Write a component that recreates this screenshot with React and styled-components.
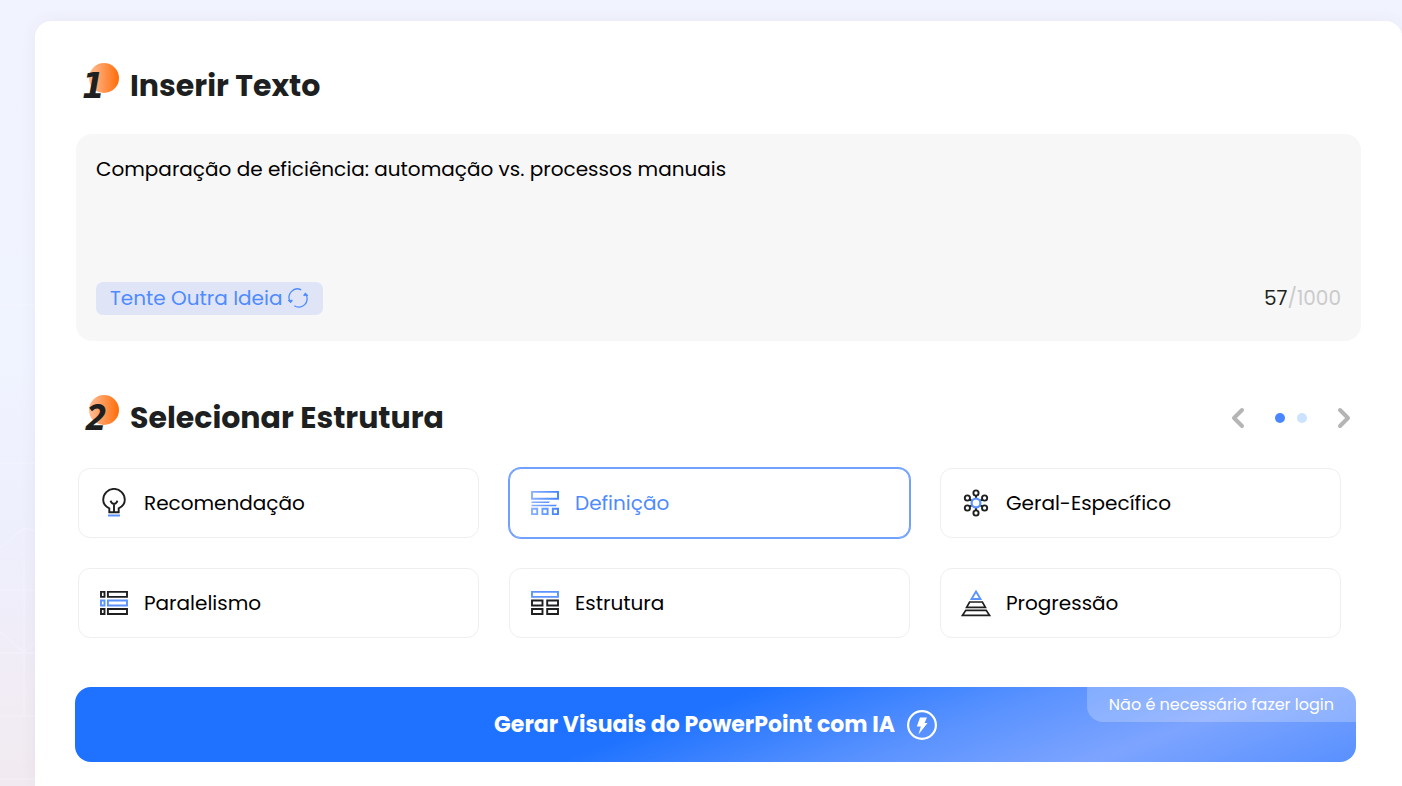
import React, { useState } from "react";
import styled, { createGlobalStyle } from "styled-components";

const GlobalStyle = createGlobalStyle`
  * {
    box-sizing: border-box;
  }
  body {
    margin: 0;
    color: #1d1f21;
    font-family: Poppins, Inter, "Liberation Sans", sans-serif;
  }
  button,
  textarea {
    font-family: inherit;
  }
`;

const Page = styled.div`
  position: relative;
  min-height: 100vh;
  display: flex;
  padding: 21px 0 0 35px;
  background: linear-gradient(180deg, #f1f3fe 0%, #f0f4ff 45%, #eeeffd 68%, #f1ecf5 88%, #f1eaf0 100%);
`;

const Backdrop = styled.svg`
  position: absolute;
  left: 0;
  top: 0;
  width: 35px;
  height: 100%;
  opacity: 0.5;
`;

const Card = styled.main`
  position: relative;
  flex: 1;
  padding: 37px 41px 24px 40px;
  border-radius: 16px 16px 0 0;
  background: #fff;
  box-shadow: 0 0 16px rgba(80, 60, 100, 0.06);
`;

const SectionHead = styled.div`
  display: flex;
  align-items: center;
  justify-content: space-between;
  height: 56px;
  padding: 0 5px 0 8px;
`;

const Title = styled.h2`
  display: flex;
  align-items: center;
  gap: 9px;
  margin: 0;
  font-size: 30px;
  line-height: 40px;
  font-weight: 700;
`;

const StepBadge = styled.svg`
  width: 38px;
  height: 44px;
  overflow: visible;
  font-family: ${(props) => props.$face}, sans-serif;
  font-size: 36px;
  font-weight: 700;
  font-style: italic;
`;

const InputPanel = styled.div`
  margin: 20px 0 49px 1px;
  padding: 16px 20px 26px;
  border-radius: 16px;
  background: #f7f7f7;
`;

const TextBox = styled.textarea`
  display: block;
  width: 100%;
  height: 132px;
  padding: 4px 0;
  border: 0;
  outline: 0;
  resize: none;
  background: transparent;
  color: #000;
  font-size: 20px;
  line-height: 30px;
`;

const PanelFoot = styled.div`
  display: flex;
  align-items: center;
  justify-content: space-between;
  height: 33px;
  line-height: 30px;
`;

const IdeaButton = styled.button`
  display: flex;
  align-items: center;
  gap: 6px;
  height: 33px;
  padding: 0 15px 2px 14px;
  border: 0;
  border-radius: 7px;
  background: #dfe5f7;
  color: #4f8bff;
  font-size: 20px;
`;

const Counter = styled.span`
  padding-bottom: 2px;
  color: #cbcbcb;
  font-size: 20px;

  b {
    color: #1d1f21;
    font-weight: 400;
  }
`;

const Pager = styled.div`
  display: flex;
  align-items: center;
  gap: 13px;
`;

const ArrowButton = styled.button`
  display: flex;
  padding: 0;
  border: 0;
  background: none;
  color: #b5b5b5;
`;

const Dot = styled.button`
  width: 10px;
  height: 10px;
  padding: 0;
  border: 0;
  border-radius: 50%;
  background: ${(props) => (props.$active ? "#4a86ff" : "#cce3ff")};
`;

const Dots = styled.div`
  display: flex;
  gap: 12px;
  padding: 0 12px;
`;

const Grid = styled.div`
  display: grid;
  grid-template-columns: repeat(3, 1fr);
  gap: 30px;
  margin: 22px 20px 49px 3px;
`;

const Option = styled.button`
  display: flex;
  align-items: center;
  gap: 15px;
  height: 70px;
  padding: 0 20px;
  border: 1px solid ${(props) => (props.$active ? "#72a1fd" : "#efefef")};
  border-radius: 12px;
  box-shadow: ${(props) => (props.$active ? "0 0 0 1px #72a1fd" : "none")};
  background: #fff;
  color: ${(props) => (props.$active ? "#4f8bff" : "#000")};
  font-size: 20px;
  text-align: left;
`;

const Generate = styled.button`
  position: relative;
  display: flex;
  align-items: center;
  justify-content: center;
  gap: 12px;
  width: calc(100% - 5px);
  height: 75px;
  padding: 0;
  border: 0;
  border-radius: 16px;
  overflow: hidden;
  background: linear-gradient(160deg, #1e72ff 0%, #1e72ff 46%, #5992ff 66%, #7da4ff 82%, #5890ff 100%);
  color: #fff;
  font-size: 22px;
  line-height: 34px;
  font-weight: 700;
`;

const LoginNote = styled.span`
  position: absolute;
  top: 0;
  right: 0;
  padding: 0 22px;
  border-bottom-left-radius: 16px;
  background: rgba(255, 255, 255, 0.23);
  font-size: 16px;
  line-height: 35px;
  font-weight: 400;
`;

const Icon = ({ children }) => (
  <svg width="30" height="30" viewBox="0 0 30 30" fill="none" stroke="#1d1f21" strokeWidth="1.9" aria-hidden="true">
    {children}
  </svg>
);

const BLUE = "#5b94ff";

const BulbIcon = () => (
  <Icon>
    <path d="M10.3 24.2v-3.8C6.8 18.7 4.2 16 4.2 11.700a10.8 10.8 0 0 1 21.6 0c0 4.300-2.6 7-6.100 8.700v3.800z" />
    <path d="M15 24v-8M11.500 12.800l.8 1.500c.6 1.100 1.500 1.500 2.700 1.700 1.200-.2 2.100-.6 2.700-1.700l.8-1.500" />
    <path stroke={BLUE} strokeWidth="2" d="M9 27.500h12" />
  </Icon>
);

const DefinitionIcon = () => (
  <Icon>
    <defs>
      <linearGradient id="defFade" gradientUnits="userSpaceOnUse" x1="1" y1="0" x2="29" y2="0">
        <stop stopColor="#8bb2ff" />
        <stop offset="1" stopColor="#4182ff" />
      </linearGradient>
    </defs>
    <g stroke="url(#defFade)">
      <path d="M2 3.900h26v6.800H2zM2 20.800h5.200v5.300H2zM12.400 20.800h5.200v5.300h-5.200zM22.800 20.800H28v5.300h-5.200z" />
      <path strokeWidth="1.500" d="M1.500 14.200H19v.1M1.500 17.400H26v.1" />
    </g>
  </Icon>
);

const NetworkIcon = () => (
  <Icon>
    <path d="M15 7.500v3M15 19.500v3M9 11.700l2.400 1.300M18.600 17l2.400 1.300M21 11.700L18.600 13M11.400 17L9 18.300" />
    <circle cx="15" cy="5" r="2.600" />
    <circle cx="15" cy="25" r="2.600" />
    <circle cx="6.400" cy="10" r="2.600" />
    <circle cx="23.600" cy="10" r="2.600" />
    <circle cx="6.400" cy="20" r="2.600" />
    <circle cx="23.600" cy="20" r="2.600" />
    <circle cx="15" cy="15" r="4.400" stroke={BLUE} strokeWidth="2.200" />
  </Icon>
);

const ParallelIcon = () => (
  <Icon>
    <path d="M2 3.900h3.500v5H2zM8.900 3.900H28v5H8.900zM2 21h3.500v5H2zM8.900 21H28v5H8.900z" />
    <path stroke={BLUE} d="M2 12.500h3.500v5H2zM8.900 12.500H28v5H8.900z" />
  </Icon>
);

const StructureIcon = () => (
  <Icon>
    <path stroke={BLUE} d="M2 3.900h26v5H2z" />
    <path d="M2 12.500h10.500v5H2zM17.200 12.500H28v5H17.200zM2 21h10.500v5H2zM17.200 21H28v5H17.200z" />
  </Icon>
);

const PyramidIcon = () => (
  <Icon>
    <path stroke={BLUE} d="M15 3.500l4.500 7.500h-9z" />
    <path strokeWidth="1.700" d="M8.600 14h12.800l3 5.300H5.600zM4.800 22.300h20.400l3.300 5H1.500z" />
  </Icon>
);

const structures = [
  { name: "Recomendação", icon: BulbIcon },
  { name: "Definição", icon: DefinitionIcon },
  { name: "Geral-Específico", icon: NetworkIcon },
  { name: "Paralelismo", icon: ParallelIcon },
  { name: "Estrutura", icon: StructureIcon },
  { name: "Progressão", icon: PyramidIcon },
];

const Step = ({ number, face, x }) => (
  <StepBadge viewBox="0 0 38 44" $face={face}>
    <defs>
      <linearGradient id={`sun${number}`}>
        <stop stopColor="#ffbe96" />
        <stop offset="0.45" stopColor="#ff9a5a" />
        <stop offset="1" stopColor="#ff6c08" />
      </linearGradient>
      <filter id={`soft${number}`}>
        <feGaussianBlur stdDeviation="0.7" />
      </filter>
    </defs>
    <circle cx="21" cy="14" r="15" fill={`url(#sun${number})`} filter={`url(#soft${number})`} />
    <text x={x} y="34" fill="#1d1f21">
      {number}
    </text>
  </StepBadge>
);

const Arrow = ({ d }) => (
  <svg width="24" height="24" viewBox="0 0 24 24" fill="none" stroke="currentColor" strokeWidth="4" strokeLinecap="round" strokeLinejoin="round">
    <path d={d} />
  </svg>
);

const App = () => {
  const [text, setText] = useState("Comparação de eficiência: automação vs. processos manuais");
  const [selected, setSelected] = useState("Definição");
  const [page, setPage] = useState(0);

  return (
    <Page>
      <GlobalStyle />
      <Backdrop fill="none" stroke="#f8f8ff" aria-hidden="true">
        <path d="M0 305h35M0 463h35M0 590h35M0 653h35M0 716h35M0 779h35M24 526v190M0 548l24-20 11 3M0 632l24 20 11-10" />
      </Backdrop>
      <Card>
        <SectionHead>
          <Title>
            <Step number="1" x="-1" face={'"DejaVu Sans Condensed", "DejaVu Sans"'} />
            Inserir Texto
          </Title>
        </SectionHead>
        <InputPanel>
          <TextBox
            aria-label="Inserir Texto"
            maxLength={1000}
            value={text}
            onChange={(e) => setText(e.target.value)}
          />
          <PanelFoot>
            <IdeaButton type="button">
              Tente Outra Ideia
              <svg width="20" height="20" viewBox="0 0 20 20" fill="none" stroke="currentColor" strokeWidth="1.300">
                <path d="M13.200 1.900A8.300 8.300 0 0 0 2.300 13.600M6.300 17.800A8.300 8.300 0 0 0 17.700 6.200" />
                <path fill="currentColor" d="M.8 12.600l1.900 1.700 1.600-2.200-1.700.9zM19.200 7.200l-1.900-1.700-1.600 2.200 1.700-.9z" />
              </svg>
            </IdeaButton>
            <Counter>
              <b>{text.length}</b>/1000
            </Counter>
          </PanelFoot>
        </InputPanel>

        <SectionHead>
          <Title>
            <Step number="2" x="3" face={'"Open Sans", "Noto Sans"'} />
            Selecionar Estrutura
          </Title>
          <Pager>
            <ArrowButton type="button" aria-label="Anterior" onClick={() => setPage(0)}>
              <Arrow d="M16 4l-8 8 8 8" />
            </ArrowButton>
            <Dots>
              <Dot type="button" aria-label="Página 1" $active={page === 0} onClick={() => setPage(0)} />
              <Dot type="button" aria-label="Página 2" $active={page === 1} onClick={() => setPage(1)} />
            </Dots>
            <ArrowButton type="button" aria-label="Próxima" onClick={() => setPage(1)}>
              <Arrow d="M8 4l8 8-8 8" />
            </ArrowButton>
          </Pager>
        </SectionHead>
        <Grid>
          {structures.map(({ name, icon: StructIcon }) => (
            <Option key={name} type="button" $active={name === selected} onClick={() => setSelected(name)}>
              <StructIcon />
              {name}
            </Option>
          ))}
        </Grid>

        <Generate type="button">
          Gerar Visuais do PowerPoint com IA
          <svg width="30" height="30" viewBox="0 0 30 30" fill="none" aria-hidden="true">
            <circle cx="15" cy="15" r="13.900" stroke="#fff" strokeWidth="2.200" />
            <path fill="#fff" d="M13 7.500h7l-2.500 5.500h3L11.500 24.500l2.300-8H9.800z" />
          </svg>
          <LoginNote>Não é necessário fazer login</LoginNote>
        </Generate>
      </Card>
    </Page>
  );
};

export default App;
